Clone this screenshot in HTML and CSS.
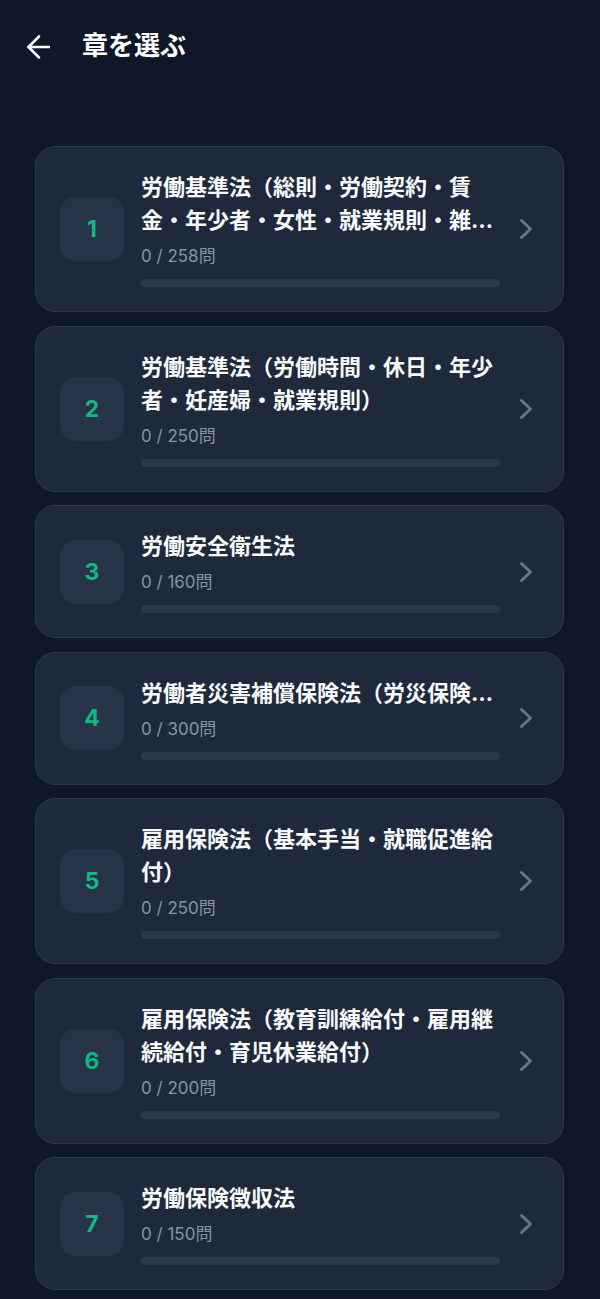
FILE: index.html
```html
<!DOCTYPE html>
<html lang="ja">
<head>
<meta charset="utf-8">
<title>章を選ぶ</title>
<link rel="stylesheet" href="styles.css">
</head>
<body>
<div class="screen">
  <header class="topbar">
    <svg class="back" width="24" height="26" viewBox="0 0 24 26" fill="none" stroke="currentColor" stroke-width="2.6" stroke-linecap="round" stroke-linejoin="round"><path d="M23 13H2.5"/><path d="M13 2.5 2.5 13 13 23.5"/></svg>
    <h1 class="title">章を選ぶ</h1>
  </header>

  <main class="list">
    <div class="card">
      <div class="num">1</div>
      <div class="body">
        <div class="name">労働基準法（総則・労働契約・賃金・年少者・女性・就業規則・雑則）</div>
        <div class="count">0 / 258問</div>
        <div class="bar"></div>
      </div>
      <svg class="chev" width="22" height="24" viewBox="0 0 22 24" fill="none" stroke="currentColor" stroke-width="3" stroke-linecap="round" stroke-linejoin="round"><path d="M4.5 3.5 13.5 12 4.5 20.5"/></svg>
    </div>

    <div class="card">
      <div class="num">2</div>
      <div class="body">
        <div class="name">労働基準法（労働時間・休日・年少者・妊産婦・就業規則）</div>
        <div class="count">0 / 250問</div>
        <div class="bar"></div>
      </div>
      <svg class="chev" width="22" height="24" viewBox="0 0 22 24" fill="none" stroke="currentColor" stroke-width="3" stroke-linecap="round" stroke-linejoin="round"><path d="M4.5 3.5 13.5 12 4.5 20.5"/></svg>
    </div>

    <div class="card">
      <div class="num">3</div>
      <div class="body">
        <div class="name">労働安全衛生法</div>
        <div class="count">0 / 160問</div>
        <div class="bar"></div>
      </div>
      <svg class="chev" width="22" height="24" viewBox="0 0 22 24" fill="none" stroke="currentColor" stroke-width="3" stroke-linecap="round" stroke-linejoin="round"><path d="M4.5 3.5 13.5 12 4.5 20.5"/></svg>
    </div>

    <div class="card">
      <div class="num">4</div>
      <div class="body">
        <div class="name one-line">労働者災害補償保険法（労災保険法）</div>
        <div class="count">0 / 300問</div>
        <div class="bar"></div>
      </div>
      <svg class="chev" width="22" height="24" viewBox="0 0 22 24" fill="none" stroke="currentColor" stroke-width="3" stroke-linecap="round" stroke-linejoin="round"><path d="M4.5 3.5 13.5 12 4.5 20.5"/></svg>
    </div>

    <div class="card">
      <div class="num">5</div>
      <div class="body">
        <div class="name">雇用保険法（基本手当・就職促進給付）</div>
        <div class="count">0 / 250問</div>
        <div class="bar"></div>
      </div>
      <svg class="chev" width="22" height="24" viewBox="0 0 22 24" fill="none" stroke="currentColor" stroke-width="3" stroke-linecap="round" stroke-linejoin="round"><path d="M4.5 3.5 13.5 12 4.5 20.5"/></svg>
    </div>

    <div class="card">
      <div class="num">6</div>
      <div class="body">
        <div class="name">雇用保険法（教育訓練給付・雇用継続給付・育児休業給付）</div>
        <div class="count">0 / 200問</div>
        <div class="bar"></div>
      </div>
      <svg class="chev" width="22" height="24" viewBox="0 0 22 24" fill="none" stroke="currentColor" stroke-width="3" stroke-linecap="round" stroke-linejoin="round"><path d="M4.5 3.5 13.5 12 4.5 20.5"/></svg>
    </div>

    <div class="card">
      <div class="num">7</div>
      <div class="body">
        <div class="name">労働保険徴収法</div>
        <div class="count">0 / 150問</div>
        <div class="bar"></div>
      </div>
      <svg class="chev" width="22" height="24" viewBox="0 0 22 24" fill="none" stroke="currentColor" stroke-width="3" stroke-linecap="round" stroke-linejoin="round"><path d="M4.5 3.5 13.5 12 4.5 20.5"/></svg>
    </div>
  </main>
</div>
</body>
</html>
```

FILE: styles.css
```css
html, body {
  margin: 0;
  padding: 0;
  background: #0f172a;
}

body {
  font-family: "Inter", "Noto Sans CJK JP", sans-serif;
  color: #f8fafc;
}

.screen {
  min-height: 1299px;
  background: #0f172a;
}

.topbar {
  height: 92px;
  display: flex;
  align-items: center;
  padding: 0 26px;
  box-sizing: border-box;
}

.back {
  color: #ffffff;
  flex: none;
  margin-top: 1px;
}

.title {
  margin: 0 0 0 32px;
  font-size: 26px;
  font-weight: 700;
  line-height: 36px;
  color: #ffffff;
}

.list {
  display: flex;
  flex-direction: column;
  gap: 13.5px;
  padding: 54px 36px 0 35px;
}

.card {
  display: flex;
  align-items: center;
  gap: 17px;
  padding: 24px;
  background: #1e293b;
  border: 1px solid #2c394d;
  border-radius: 20px;
}

.num {
  flex: none;
  width: 64px;
  height: 64px;
  border-radius: 16px;
  background: #273447;
  display: flex;
  align-items: center;
  justify-content: center;
  font-size: 23px;
  font-weight: 700;
  color: #10b981;
}

.body {
  flex: 1;
  min-width: 0;
  display: flex;
  flex-direction: column;
}

.name {
  font-size: 22px;
  font-weight: 700;
  line-height: 33px;
  color: #f8fafc;
  display: -webkit-box;
  -webkit-line-clamp: 2;
  -webkit-box-orient: vertical;
  overflow: hidden;
}

.name.one-line {
  display: block;
  white-space: nowrap;
  text-overflow: ellipsis;
}

.count {
  margin-top: 8px;
  font-size: 17px;
  line-height: 22px;
  color: #8794a7;
}

.bar {
  margin-top: 12px;
  height: 8px;
  border-radius: 4px;
  background: #2b384b;
}

.chev {
  flex: none;
  color: #66758a;
}
```
